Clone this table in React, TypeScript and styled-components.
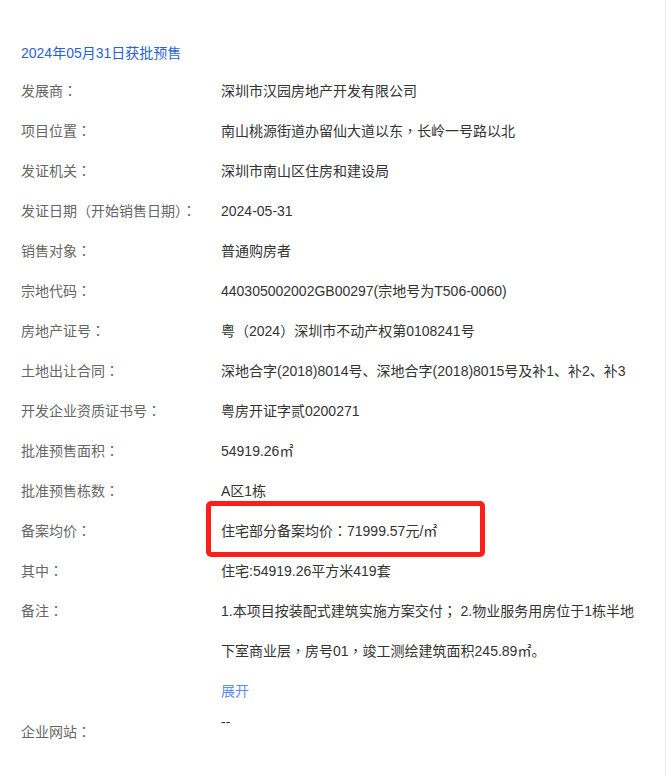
import styled, { createGlobalStyle } from "styled-components";

const GlobalStyle = createGlobalStyle`
  html, body {
    margin: 0;
    padding: 0;
    background: #ffffff;
  }
  body {
    font-family: "Liberation Sans", "Noto Sans CJK SC", sans-serif;
  }
`;

const Page = styled.div`
  width: 666px;
  min-height: 776px;
  border-right: 1px solid #e9e9f2;
  padding: 35px 0 0 21px;
  box-sizing: border-box;
  font-size: 14px;
`;

const Title = styled.div`
  color: #2b5fd4;
  line-height: 36px;
`;

const Row = styled.div`
  display: flex;
  align-items: flex-start;
`;

const Label = styled.div<{ $lh?: number }>`
  width: 200px;
  flex: none;
  color: #666666;
  line-height: ${(p) => p.$lh ?? 40}px;
`;

const Value = styled.div<{ $lh?: number }>`
  position: relative;
  width: 420px;
  color: #333333;
  line-height: ${(p) => p.$lh ?? 40}px;
`;

// full-width punctuation sits centred in its box, as in the original font
const Punct = styled.span`
  font-family: "Noto Sans CJK TC", sans-serif;
  line-height: 14px;
`;

const Highlight = styled.div`
  position: absolute;
  left: -15px;
  top: -10px;
  width: 279px;
  height: 56px;
  box-sizing: border-box;
  border: 5px solid #ff1f1a;
  border-radius: 5px;
  pointer-events: none;
`;

const More = styled.div`
  color: #5b8ef0;
  line-height: 40px;
`;

function T({ s }: { s: string }) {
  return (
    <>
      {s.split(/([：，（）；])/).map((part, i) =>
        i % 2 ? <Punct key={i}>{part}</Punct> : part
      )}
    </>
  );
}

const rows: [string, string][] = [
  ["发展商：", "深圳市汉园房地产开发有限公司"],
  ["项目位置：", "南山桃源街道办留仙大道以东，长岭一号路以北"],
  ["发证机关：", "深圳市南山区住房和建设局"],
  ["发证日期（开始销售日期）：", "2024-05-31"],
  ["销售对象：", "普通购房者"],
  ["宗地代码：", "440305002002GB00297(宗地号为T506-0060)"],
  ["房地产证号：", "粤（2024）深圳市不动产权第0108241号"],
  ["土地出让合同：", "深地合字(2018)8014号、深地合字(2018)8015号及补1、补2、补3"],
  ["开发企业资质证书号：", "粤房开证字贰0200271"],
  ["批准预售面积：", "54919.26㎡"],
  ["批准预售栋数：", "A区1栋"],
];

export default function App() {
  return (
    <>
      <GlobalStyle />
      <Page>
        <Title>2024年05月31日获批预售</Title>
        {rows.map(([k, v]) => (
          <Row key={k}>
            <Label><T s={k} /></Label>
            <Value><T s={v} /></Value>
          </Row>
        ))}
        <Row>
          <Label><T s="备案均价：" /></Label>
          <Value>
            <T s="住宅部分备案均价：71999.57元/㎡" />
            <Highlight />
          </Value>
        </Row>
        <Row>
          <Label><T s="其中：" /></Label>
          <Value>住宅:54919.26平方米419套</Value>
        </Row>
        <Row>
          <Label><T s="备注：" /></Label>
          <Value>
            <T s="1.本项目按装配式建筑实施方案交付； 2.物业服务用房位于1栋半地下室商业层，房号01，竣工测绘建筑面积245.89㎡。" />
            <More>展开</More>
          </Value>
        </Row>
        <Row>
          <Label $lh={42}><T s="企业网站：" /></Label>
          <Value $lh={22}>--</Value>
        </Row>
      </Page>
    </>
  );
}
